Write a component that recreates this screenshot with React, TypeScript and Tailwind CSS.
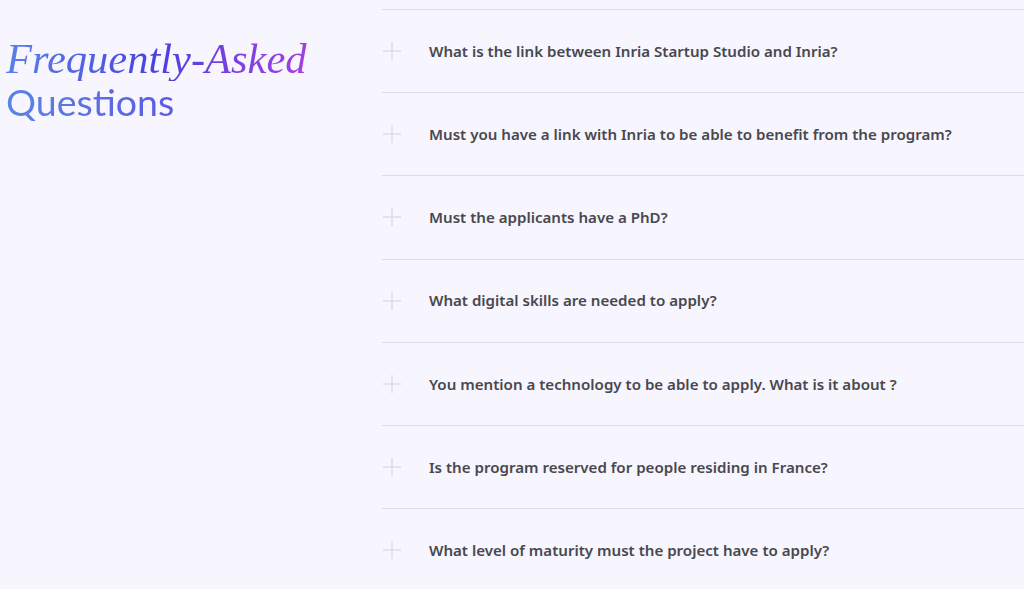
import React from 'react';

const questions = [
  'What is the link between Inria Startup Studio and Inria?',
  'Must you have a link with Inria to be able to benefit from the program?',
  'Must the applicants have a PhD?',
  'What digital skills are needed to apply?',
  'You mention a technology to be able to apply. What is it about ?',
  'Is the program reserved for people residing in France?',
  'What level of maturity must the project have to apply?',
];

function PlusIcon() {
  return (
    <svg width="18" height="18" viewBox="0 0 18 18" className="shrink-0">
      <path d="M9 0v18M0 9h18" stroke="#dedbe4" strokeWidth="1.5" />
    </svg>
  );
}

export default function App() {
  return (
    <div className="w-[1024px] h-[589px] overflow-hidden bg-[#f7f5fd] flex">
      {/* Heading */}
      <div className="w-[382px] shrink-0 pl-[6px] pt-[37px]">
        <h2 className="leading-none">
          <span className="block pr-2 text-[42.5px] leading-[44px] italic font-['Liberation_Serif',serif] bg-linear-to-r from-[#5b80e6] via-[#4b3ee0] to-[#a93ce0] bg-clip-text text-transparent w-fit">
            Frequently-Asked
          </span>
          <span className="block text-[37.5px] leading-[42px] font-['Lato',sans-serif] bg-linear-to-r from-[#5b84e4] to-[#5c5ae2] bg-clip-text text-transparent w-fit">
            Questions
          </span>
        </h2>
      </div>

      {/* Questions list */}
      <div className="flex-1 pt-[9px]">
        <div className="border-t border-[#dedae8]">
          {questions.map((q) => (
            <div
              key={q}
              className="h-[83.2px] flex items-center border-b border-[#dedae8] pl-px"
            >
              <PlusIcon />
              <span className="ml-[28px] text-[15.1px] font-semibold text-[#48484f] font-['Noto_Sans',sans-serif]">
                {q}
              </span>
            </div>
          ))}
        </div>
      </div>
    </div>
  );
}
